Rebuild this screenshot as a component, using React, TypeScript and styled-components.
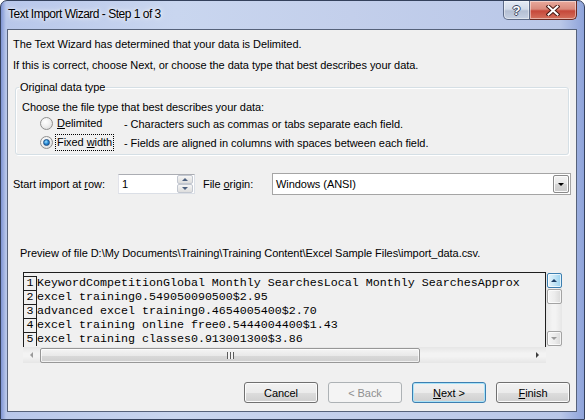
import React from "react";
import styled, { createGlobalStyle } from "styled-components";

const GlobalStyle = createGlobalStyle`
  html, body {
    margin: 0;
    padding: 0;
    background: #ffffff;
  }
  body {
    font-family: "Liberation Sans", Arial, sans-serif;
  }
`;

const uiFont = `
  font-family: "Liberation Sans", Arial, sans-serif;
  font-size: 11px;
  letter-spacing: -0.05px;
  color: #000;
`;

const Window = styled.div`
  width: 585px;
  height: 420px;
  box-sizing: border-box;
  display: flex;
  flex-direction: column;
  padding: 0 7px 7px 6px;
  border: 1px solid #34415c;
  border-radius: 7px 7px 0 0;
  overflow: hidden;
  background: linear-gradient(
      90deg,
      #7f95d4 0px,
      #b8c7ea 5px,
      #c9d6ef 30%,
      #c3cfeb 60%,
      #b9c7e8 96%,
      #8ea3da 100%
    );
`;

const TitleBar = styled.div`
  height: 28px;
  flex-shrink: 0;
  display: flex;
  align-items: center;
  justify-content: space-between;
`;

const Title = styled.div`
  padding-left: 1px;
  margin-top: -2px;
  font-family: "Liberation Sans", Arial, sans-serif;
  font-size: 12px;
  letter-spacing: -0.5px;
  color: #000;
  text-shadow: 0 0 6px rgba(255, 255, 255, 0.95), 0 0 3px rgba(255, 255, 255, 0.9);
`;

const CaptionButtons = styled.div`
  align-self: flex-start;
  display: flex;
  height: 19px;
`;

const CaptionButton = styled.div<{ $close?: boolean }>`
  box-sizing: border-box;
  height: 19px;
  width: ${(p) => (p.$close ? "47px" : "27px")};
  display: flex;
  align-items: center;
  justify-content: center;
  border: 1px solid ${(p) => (p.$close ? "#6a2a22" : "#5d6a86")};
  border-top: none;
  border-left: ${(p) => (p.$close ? "none" : undefined)};
  border-radius: ${(p) => (p.$close ? "0 0 5px 0" : "0 0 0 5px")};
  background: ${(p) =>
    p.$close
      ? "linear-gradient(180deg, #e9a99c 0%, #d98a7c 45%, #c6483a 55%, #d4705c 100%)"
      : "linear-gradient(180deg, #e4eaf4 0%, #d3dbe9 45%, #b4bfd3 55%, #c6d0e2 100%)"};
  box-shadow: inset 0 0 0 1px rgba(255, 255, 255, 0.45);
`;

const HelpGlyph = styled.span`
  font-family: "Liberation Sans", Arial, sans-serif;
  font-weight: bold;
  font-size: 13px;
  line-height: 13px;
  color: #ffffff;
  text-shadow: 1px 0 0 #3a4660, -1px 0 0 #3a4660, 0 1px 0 #3a4660, 0 -1px 0 #3a4660;
`;

const Client = styled.div`
  flex: 1;
  display: flex;
  flex-direction: column;
  padding: 7px 6px 8px 5px;
  border: 1px solid #56627a;
  background: #f0f0f0;
  ${uiFont}
`;

const TextLine = styled.div<{ $top?: number; $left?: number }>`
  flex-shrink: 0;
  height: 14px;
  line-height: 14px;
  white-space: nowrap;
  margin-top: ${(p) => p.$top ?? 0}px;
  margin-left: ${(p) => p.$left ?? 0}px;
`;

const GroupBox = styled.fieldset`
  flex-shrink: 0;
  min-width: 0;
  margin: 8px 1px 0 2px;
  padding: 0 0 2px 3px;
  border: 1px solid #d5dfe5;
  border-radius: 3px;
  box-shadow: inset 1px 1px 0 #ffffff, 1px 1px 0 #ffffff;
`;

const Legend = styled.legend`
  padding: 0 1px;
  height: 14px;
  line-height: 14px;
`;

const RadioRow = styled.div`
  height: 19px;
  display: flex;
  align-items: center;
  margin-left: 21px;
  white-space: nowrap;
`;

const RadioCircle = styled.span<{ $checked?: boolean }>`
  box-sizing: border-box;
  width: 13px;
  height: 13px;
  border-radius: 50%;
  border: 1px solid #8f8f8f;
  background: radial-gradient(circle at 40% 35%, #ffffff 0%, #f0f0f0 45%, #d2d2d2 100%);
  display: flex;
  align-items: center;
  justify-content: center;
  flex-shrink: 0;

  &::after {
    content: "";
    display: ${(p) => (p.$checked ? "block" : "none")};
    width: 7px;
    height: 7px;
    border-radius: 50%;
    box-sizing: border-box;
    border: 1px solid #1b4f86;
    background: radial-gradient(circle at 40% 35%, #9fe0ff 0%, #2d8fd8 45%, #0b4c94 100%);
  }
`;

const OptionSlot = styled.span`
  width: 69px;
  margin-left: 2px;
  flex-shrink: 0;
  display: flex;
`;

const OptionName = styled.span<{ $focused?: boolean }>`
  padding: 0 1px;
  height: 15px;
  line-height: 15px;
  border: 1px dotted ${(p) => (p.$focused ? "#000" : "transparent")};
`;

const Accel = styled.span`
  text-decoration: underline;
  text-underline-offset: 1px;
`;

const ImportRow = styled.div`
  flex-shrink: 0;
  margin-top: 18px;
  height: 22px;
  display: flex;
  align-items: center;
  white-space: nowrap;
`;

const FieldLabel = styled.span<{ $width: number; $gap?: number }>`
  width: ${(p) => p.$width}px;
  margin-left: ${(p) => p.$gap ?? 0}px;
  flex-shrink: 0;
`;

const SpinBox = styled.div`
  box-sizing: border-box;
  width: 77px;
  height: 20px;
  display: flex;
  align-items: center;
  justify-content: space-between;
  padding: 0 1px 0 3px;
  background: #ffffff;
  border: 1px solid #dbdfe6;
  border-top-color: #abadb3;
  border-left-color: #e2e3ea;
`;

const SpinButtons = styled.div`
  width: 16px;
  height: 18px;
  display: flex;
  flex-direction: column;
`;

const SpinButton = styled.div`
  box-sizing: border-box;
  flex: 1;
  display: flex;
  align-items: center;
  justify-content: center;
  border: 1px solid #c2c7d0;
  border-radius: 2px;
  background: linear-gradient(180deg, #f6f6f6 0%, #e9e9e9 50%, #dedede 100%);
`;

const ComboBox = styled.div`
  box-sizing: border-box;
  flex: 1;
  margin-right: -1px;
  height: 22px;
  display: flex;
  align-items: center;
  justify-content: space-between;
  padding: 0 1px 0 3px;
  background: #ffffff;
  border: 1px solid #a5a5a5;
`;

const DropButton = styled.div`
  box-sizing: border-box;
  width: 16px;
  height: 18px;
  display: flex;
  align-items: center;
  justify-content: center;
  border: 1px solid #8a8a8a;
  border-radius: 2px;
  background: linear-gradient(180deg, #f3f3f3 0%, #e8e8e8 50%, #d6d6d6 51%, #cbcbcb 100%);
  box-shadow: inset 0 0 0 1px #fbfbfb;
`;

const Preview = styled.div`
  flex-shrink: 0;
  margin: 12px 8px 0 10px;
  height: 91px;
  display: grid;
  grid-template-columns: 1fr 16px;
  grid-template-rows: 75px 16px;
`;

const PreviewPane = styled.div`
  overflow: hidden;
  padding-top: 3px;
  border: 1px solid #1e1e1e;
  border-bottom: none;
  background: #f0f0f0;
`;

const PreviewRow = styled.div`
  display: flex;
  height: 14px;
  font-family: "Liberation Mono", "Courier New", monospace;
  font-size: 11.67px;
  letter-spacing: 0;
  line-height: 14px;
  white-space: nowrap;
  color: #000;
`;

const RowNumber = styled.span`
  box-sizing: border-box;
  width: 13px;
  flex-shrink: 0;
  text-align: center;
  border-top: 1px solid #1e1e1e;
  border-right: 1px solid #1e1e1e;
  line-height: 13px;
`;

const VScroll = styled.div`
  display: flex;
  flex-direction: column;
  align-items: center;
  padding-top: 1px;
  background: linear-gradient(90deg, #e6e6e6 0%, #f3f3f3 40%, #f3f3f3 60%, #e6e6e6 100%);
`;

const ScrollPart = styled.div<{ $hot?: boolean }>`
  box-sizing: border-box;
  width: 15px;
  height: 15px;
  flex-shrink: 0;
  display: flex;
  align-items: center;
  justify-content: center;
  border: 1px solid ${(p) => (p.$hot ? "#3c7fb1" : "#a3a3a3")};
  border-radius: 2px;
  background: ${(p) =>
    p.$hot
      ? "linear-gradient(90deg, #e5f4fc 0%, #c4e5f6 50%, #98d1ef 100%)"
      : "linear-gradient(90deg, #f5f5f5 0%, #ececec 50%, #d9d9d9 100%)"};
  box-shadow: inset 0 0 0 1px rgba(255, 255, 255, 0.7);
  margin-bottom: 1px;
`;

const VTrack = styled.div`
  flex: 1;
`;

const HScroll = styled.div`
  display: flex;
  align-items: center;
  background: linear-gradient(180deg, #e6e6e6 0%, #f3f3f3 40%, #f3f3f3 60%, #e6e6e6 100%);
`;

const ArrowCell = styled.div`
  width: 17px;
  height: 16px;
  flex-shrink: 0;
  display: flex;
  align-items: center;
  justify-content: center;
`;

const HThumb = styled.div`
  box-sizing: border-box;
  width: 380px;
  height: 15px;
  display: flex;
  align-items: center;
  justify-content: center;
  border: 1px solid #979797;
  border-radius: 2px;
  background: linear-gradient(180deg, #f4f4f4 0%, #e9e9e9 50%, #d9d9d9 51%, #cfcfcf 100%);
  box-shadow: inset 0 0 0 1px rgba(255, 255, 255, 0.7);
`;

const Grip = styled.span`
  width: 7px;
  height: 7px;
  background: repeating-linear-gradient(90deg, #5c5c5c 0 1px, #f4f4f4 1px 3px);
`;

const HTrack = styled.div`
  flex: 1;
`;

const Corner = styled.div`
  background: #f0f0f0;
`;

const ButtonRow = styled.div`
  flex-shrink: 0;
  margin-top: 19px;
  display: flex;
  justify-content: flex-end;
  gap: 10px;
`;

const PushButton = styled.button<{ $default?: boolean }>`
  box-sizing: border-box;
  width: 74px;
  height: 21px;
  padding: 0;
  ${uiFont}
  border-radius: 3px;
  border: 1px solid ${(p) => (p.$default ? "#3c7fb1" : "#707070")};
  background: linear-gradient(180deg, #f2f2f2 0%, #ebebeb 50%, #dddddd 51%, #cfcfcf 100%);
  box-shadow: inset 0 0 0 1px ${(p) => (p.$default ? "#a9e3f8" : "#fbfbfb")};

  &:disabled {
    color: #8f8f8f;
    border-color: #adb2b5;
    background: #f4f4f4;
    box-shadow: none;
  }
`;

type Dir = "up" | "down" | "left" | "right";

const Arrow = styled.span<{ $dir: Dir; $size?: number; $color?: string }>`
  width: 0;
  height: 0;
  border-style: solid;
  ${({ $dir, $size = 3, $color = "#000" }) => {
    const s = $size;
    switch ($dir) {
      case "up":
        return `border-width: 0 ${s}px ${s}px ${s}px; border-color: transparent transparent ${$color} transparent;`;
      case "down":
        return `border-width: ${s}px ${s}px 0 ${s}px; border-color: ${$color} transparent transparent transparent;`;
      case "left":
        return `border-width: ${s}px ${s}px ${s}px 0; border-color: transparent ${$color} transparent transparent;`;
      default:
        return `border-width: ${s}px 0 ${s}px ${s}px; border-color: transparent transparent transparent ${$color};`;
    }
  }}
`;

const previewLines = [
  "KeywordCompetitionGlobal Monthly SearchesLocal Monthly SearchesApprox",
  "excel training0.549050090500$2.95",
  "advanced excel training0.4654005400$2.70",
  "excel training online free0.5444004400$1.43",
  "excel training classes0.913001300$3.86",
];

const App = () => {
  return (
    <>
      <GlobalStyle />
      <Window>
        <TitleBar>
          <Title>Text Import Wizard - Step 1 of 3</Title>
          <CaptionButtons>
            <CaptionButton>
              <HelpGlyph>?</HelpGlyph>
            </CaptionButton>
            <CaptionButton $close>
              <svg width="14" height="11" viewBox="0 0 14 11">
                <path d="M2.5 1.5 L11.5 9.5 M11.5 1.5 L2.5 9.5" stroke="#4a1a14" strokeWidth="4" strokeLinecap="square" />
                <path d="M2.5 1.5 L11.5 9.5 M11.5 1.5 L2.5 9.5" stroke="#ffffff" strokeWidth="2" strokeLinecap="square" />
              </svg>
            </CaptionButton>
          </CaptionButtons>
        </TitleBar>

        <Client>
          <TextLine>The Text Wizard has determined that your data is Delimited.</TextLine>
          <TextLine $top={7}>
            If this is correct, choose Next, or choose the data type that best describes your data.
          </TextLine>

          <GroupBox>
            <Legend>Original data type</Legend>
            <TextLine $top={6} $left={3}>
              Choose the file type that best describes your data:
            </TextLine>
            <RadioRow>
              <RadioCircle />
              <OptionSlot>
                <OptionName>
                  <Accel>D</Accel>elimited
                </OptionName>
              </OptionSlot>
              <span>- Characters such as commas or tabs separate each field.</span>
            </RadioRow>
            <RadioRow>
              <RadioCircle $checked />
              <OptionSlot>
                <OptionName $focused>
                  Fixed <Accel>w</Accel>idth
                </OptionName>
              </OptionSlot>
              <span>- Fields are aligned in columns with spaces between each field.</span>
            </RadioRow>
          </GroupBox>

          <ImportRow>
            <FieldLabel $width={105}>
              Start import at <Accel>r</Accel>ow:
            </FieldLabel>
            <SpinBox>
              <span>1</span>
              <SpinButtons>
                <SpinButton>
                  <Arrow $dir="up" $size={3} $color="#4c607f" />
                </SpinButton>
                <SpinButton>
                  <Arrow $dir="down" $size={3} $color="#4c607f" />
                </SpinButton>
              </SpinButtons>
            </SpinBox>
            <FieldLabel $width={69} $gap={8}>
              File <Accel>o</Accel>rigin:
            </FieldLabel>
            <ComboBox>
              <span>Windows (ANSI)</span>
              <DropButton>
                <Arrow $dir="down" $size={3} $color="#000" />
              </DropButton>
            </ComboBox>
          </ImportRow>

          <TextLine $top={51} $left={7}>
            Preview of file D:\My Documents\Training\Training Content\Excel Sample Files\import_data.csv.
          </TextLine>

          <Preview>
            <PreviewPane>
              {previewLines.map((line, i) => (
                <PreviewRow key={i}>
                  <RowNumber>{i + 1}</RowNumber>
                  <span>{line}</span>
                </PreviewRow>
              ))}
            </PreviewPane>
            <VScroll>
              <ScrollPart $hot>
                <Arrow $dir="up" $size={3} $color="#1c3f66" />
              </ScrollPart>
              <ScrollPart />
              <VTrack />
              <ScrollPart>
                <Arrow $dir="down" $size={3} $color="#9a9a9a" />
              </ScrollPart>
            </VScroll>
            <HScroll>
              <ArrowCell>
                <Arrow $dir="left" $size={3} $color="#9a9a9a" />
              </ArrowCell>
              <HThumb>
                <Grip />
              </HThumb>
              <HTrack />
              <ArrowCell>
                <Arrow $dir="right" $size={3} $color="#3d3d3d" />
              </ArrowCell>
            </HScroll>
            <Corner />
          </Preview>

          <ButtonRow>
            <PushButton>Cancel</PushButton>
            <PushButton disabled>&lt; Back</PushButton>
            <PushButton $default>
              <Accel>N</Accel>ext &gt;
            </PushButton>
            <PushButton>
              <Accel>F</Accel>inish
            </PushButton>
          </ButtonRow>
        </Client>
      </Window>
    </>
  );
};

export default App;
